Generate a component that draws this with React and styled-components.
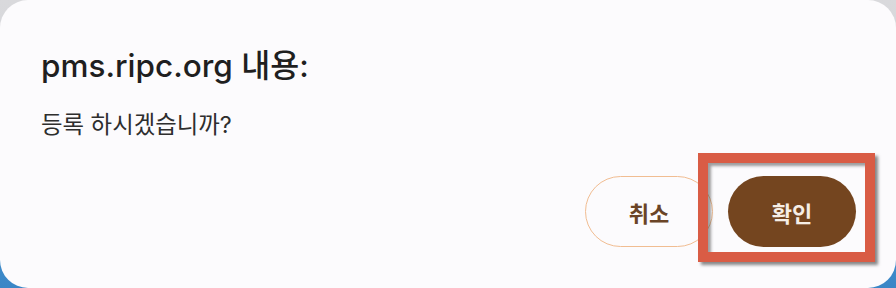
import React from "react";
import styled, { createGlobalStyle } from "styled-components";

const GlobalStyle = createGlobalStyle`
  html, body {
    margin: 0;
    padding: 0;
  }
  body {
    width: 896px;
    height: 288px;
    overflow: hidden;
    background: linear-gradient(180deg, #d9d9dc 0%, #cfd3d9 60%, #3f8ccb 88%, #3a86c6 100%);
    font-family: Inter, "Noto Sans CJK KR", sans-serif;
  }
`;

const Dialog = styled.div`
  box-sizing: border-box;
  width: 896px;
  height: 288px;
  background: #fcfbfd;
  border-radius: 28px;
  padding: 46px 40px 0 41px;
  display: flex;
  flex-direction: column;
`;

const Title = styled.div`
  font-size: 31.5px;
  font-weight: 500;
  color: #1f1f1f;
  line-height: 40px;
`;

const Message = styled.div`
  margin-top: 23px;
  font-size: 23.4px;
  color: #2e2e2e;
  line-height: 32px;
`;

const Actions = styled.div`
  margin-top: 35px;
  display: flex;
  justify-content: flex-end;
  gap: 15px;
`;

const Button = styled.button`
  box-sizing: border-box;
  width: 128px;
  height: 71px;
  border-radius: 36px;
  font-family: Inter, "Noto Sans CJK KR", sans-serif;
  font-size: 22px;
  font-weight: 700;
  cursor: pointer;
  border: ${(p) => (p.$primary ? "none" : "1.5px solid #f1bd92")};
  background: ${(p) => (p.$primary ? "#74451f" : "#fcfbfd")};
  color: ${(p) => (p.$primary ? "#f6eee6" : "#6a4427")};
`;

const Highlight = styled.div`
  position: relative;
`;

const Frame = styled.div`
  position: absolute;
  left: -30px;
  right: -19px;
  top: -23px;
  bottom: -15px;
  border: 10px solid #d95c45;
  pointer-events: none;
  box-shadow: 3px 3px 3px rgba(40, 40, 40, 0.55),
    inset 3px 3px 3px rgba(40, 40, 40, 0.45);
`;

export default function App() {
  return (
    <>
      <GlobalStyle />
      <Dialog>
        <Title>pms.ripc.org 내용:</Title>
        <Message>등록 하시겠습니까?</Message>
        <Actions>
          <Button>취소</Button>
          <Highlight>
            <Button $primary>확인</Button>
            <Frame />
          </Highlight>
        </Actions>
      </Dialog>
    </>
  );
}
